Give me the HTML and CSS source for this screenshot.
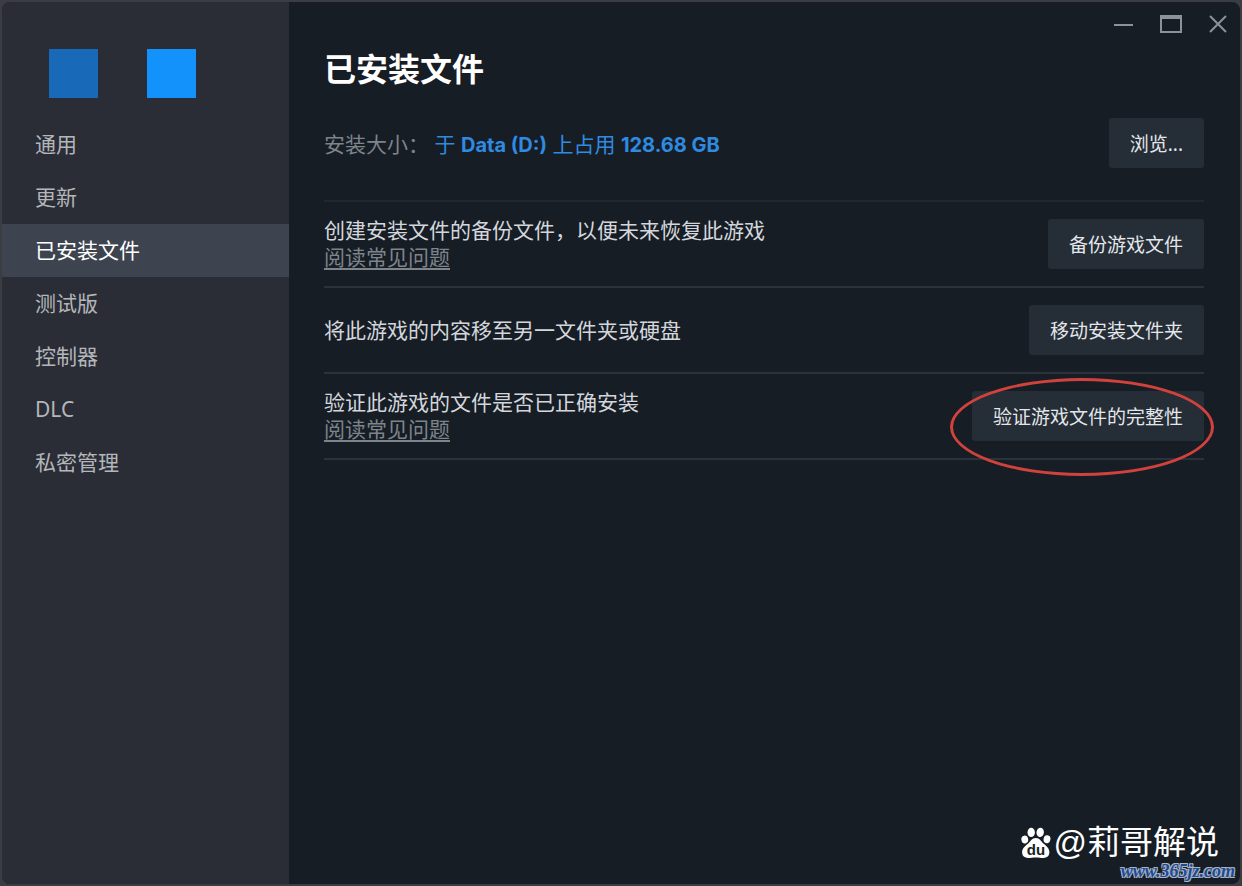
FILE: index.html
```html
<!DOCTYPE html>
<html lang="zh-CN">
  <head>
    <meta charset="UTF-8" />
    <meta name="viewport" content="width=device-width, initial-scale=1.0" />
    <title>已安装文件</title>
    <link rel="stylesheet" href="styles.css">
  </head>
  <body>
    <div class="window">
      <aside class="sidebar">
        <div class="swatches">
          <span class="swatch swatch-dark"></span>
          <span class="swatch"></span>
        </div>
        <nav class="menu">
          <a href="#">通用</a>
          <a href="#">更新</a>
          <a href="#" class="active" aria-current="page">已安装文件</a>
          <a href="#">测试版</a>
          <a href="#">控制器</a>
          <a href="#">DLC</a>
          <a href="#">私密管理</a>
        </nav>
      </aside>

      <main class="main">
        <div class="window-controls">
          <button type="button" aria-label="最小化">
            <svg width="24" height="24" viewBox="0 0 24 24" fill="none" stroke="currentColor" stroke-width="2">
              <path d="M3 13h19" />
            </svg>
          </button>
          <button type="button" aria-label="最大化">
            <svg width="24" height="24" viewBox="0 0 24 24" fill="none" stroke="currentColor" stroke-width="2">
              <path d="M3 4h20v16H3zM3 6h20" />
            </svg>
          </button>
          <button type="button" aria-label="关闭">
            <svg width="24" height="24" viewBox="0 0 24 24" fill="none" stroke="currentColor" stroke-width="2">
              <path d="M5 4l16 16M21 4L5 20" />
            </svg>
          </button>
        </div>

        <div class="content">
          <h1>已安装文件</h1>

          <div class="install-size">
            <p>
              <span class="size-label">安装大小：</span>
              <span class="size-value">于 <b>Data (D:)</b> 上占用 <b>128.68 GB</b></span>
            </p>
            <button type="button" class="btn">浏览...</button>
          </div>

          <div class="rows">
            <div class="row">
              <div class="row-text">
                <p>创建安装文件的备份文件，以便未来恢复此游戏</p>
                <a href="#">阅读常见问题</a>
              </div>
              <button type="button" class="btn">备份游戏文件</button>
            </div>
            <div class="row">
              <div class="row-text">
                <p>将此游戏的内容移至另一文件夹或硬盘</p>
              </div>
              <button type="button" class="btn">移动安装文件夹</button>
            </div>
            <div class="row">
              <div class="row-text">
                <p>验证此游戏的文件是否已正确安装</p>
                <a href="#">阅读常见问题</a>
              </div>
              <div class="marked">
                <button type="button" class="btn">验证游戏文件的完整性</button>
                <span class="marker"></span>
              </div>
            </div>
          </div>
        </div>
      </main>

      <div class="watermark">
        <svg width="30" height="32" viewBox="0 0 30 32">
          <g fill="#fff">
            <ellipse cx="3.8" cy="12.6" rx="3.4" ry="4" transform="rotate(-12 3.8 12.6)" />
            <ellipse cx="10.2" cy="5.4" rx="3.7" ry="4.6" />
            <ellipse cx="19.2" cy="5.4" rx="3.7" ry="4.6" transform="rotate(8 19.2 5.4)" />
            <ellipse cx="26" cy="12.2" rx="3.4" ry="4" transform="rotate(10 26 12.2)" />
            <path d="M14.8 11c4 0 5.400 3.600 7.600 5.500 2.800 2.300 6 4.700 6 8.800 0 3.600-2.500 5.700-5.900 5.700-2.700 0-4.900-.5-7.700-.5s-5 .5-7.700.5c-3.400 0-6-2.100-6-5.700 0-4.100 3.400-6.500 6.100-8.800 2.200-1.900 3.600-5.500 7.600-5.500z" />
          </g>
          <text x="15" y="28" text-anchor="middle" class="paw-text">du</text>
        </svg>
        <span>@莉哥解说</span>
      </div>
      <div class="site-url">www.365jz.com</div>
    </div>
  </body>
</html>
```

FILE: styles.css
```css
* {
  box-sizing: border-box;
}
body {
  margin: 0;
  background: #3b3d43;
  color: #d3d7dd;
  font-family: "Noto Sans", "Noto Sans CJK SC", sans-serif;
  font-size: 21px;
}
h1,
p {
  margin: 0;
}
button {
  font-family: inherit;
  border: none;
  cursor: pointer;
}
.window {
  position: relative;
  display: flex;
  min-height: 100vh;
  border: 2px solid #3b3d43;
  border-radius: 10px;
  background: #171d24;
  overflow: hidden;
}

/* Sidebar */
.sidebar {
  flex: 0 0 287px;
  padding-top: 47px;
  background: #2b2d36;
}
.swatches {
  display: flex;
  gap: 49px;
  padding-left: 47px;
  margin-bottom: 20px;
}
.swatch {
  width: 49px;
  height: 49px;
  background: #1492fb;
}
.swatch-dark {
  background: #186ab9;
}
.menu a {
  display: block;
  padding-left: 33px;
  color: #b3b6ba;
  line-height: 53px;
  text-decoration: none;
}
.menu a:hover {
  color: #fff;
}
.menu a.active {
  background: #3d4450;
  color: #fff;
}

/* Main panel */
.main {
  flex: 1;
  min-width: 0;
}
.window-controls {
  display: flex;
  justify-content: flex-end;
}
.window-controls button {
  display: flex;
  align-items: center;
  justify-content: center;
  width: 47px;
  height: 44px;
  padding: 0;
  background: none;
  color: #8b929a;
}
.content {
  padding: 0 36px 0 35px;
}
h1 {
  margin-bottom: 26px;
  color: #fff;
  font-size: 32px;
  font-weight: 700;
  line-height: 46px;
}
.install-size {
  display: flex;
  align-items: center;
  justify-content: space-between;
  margin-bottom: 32px;
}
.size-label {
  color: #7e848b;
}
.size-value {
  color: #2f8be0;
}
.size-value b {
  font-family: Inter, sans-serif;
  font-size: 20px;
}
.btn {
  height: 50px;
  padding: 0 21px;
  border-radius: 3px;
  background: #252d36;
  color: #e3e6ea;
  font-size: 19px;
  white-space: nowrap;
}
.btn:hover {
  background: #3d4450;
}
.rows {
  border-top: 2px solid #20272e;
}
.row {
  display: flex;
  align-items: center;
  justify-content: space-between;
  gap: 20px;
  min-height: 86px;
  padding: 14px 0;
  border-bottom: 2px solid #2b323a;
}
.row-text {
  line-height: 27px;
}
.row-text a {
  display: block;
  width: fit-content;
  color: #7e848b;
  text-underline-offset: 3px;
}

/* Red ring drawn over the verify button */
.marked {
  position: relative;
}
.marked .btn {
  display: block;
}
.marker {
  position: absolute;
  inset: -13px -10px -35px -22px;
  border: 3px solid #d2423c;
  border-radius: 50%;
  pointer-events: none;
}

.watermark {
  position: absolute;
  right: 21px;
  bottom: 23px;
  display: flex;
  align-items: center;
  gap: 3px;
  color: #fff;
  font-family: "Liberation Sans", "Noto Sans CJK SC", sans-serif;
  font-size: 33px;
  line-height: 36px;
}
.paw-text {
  fill: #171d24;
  font-family: "Liberation Sans", sans-serif;
  font-size: 15px;
  font-weight: 700;
}
.site-url {
  position: absolute;
  right: 5px;
  bottom: 3px;
  color: #1d4a94;
  font-family: "Liberation Serif", serif;
  font-size: 18px;
  font-style: italic;
  font-weight: 700;
  line-height: 20px;
  text-shadow: 1px 1px #a9b4c4, -1px 1px #a9b4c4, 1px -1px #a9b4c4, -1px -1px #a9b4c4;
}
```
